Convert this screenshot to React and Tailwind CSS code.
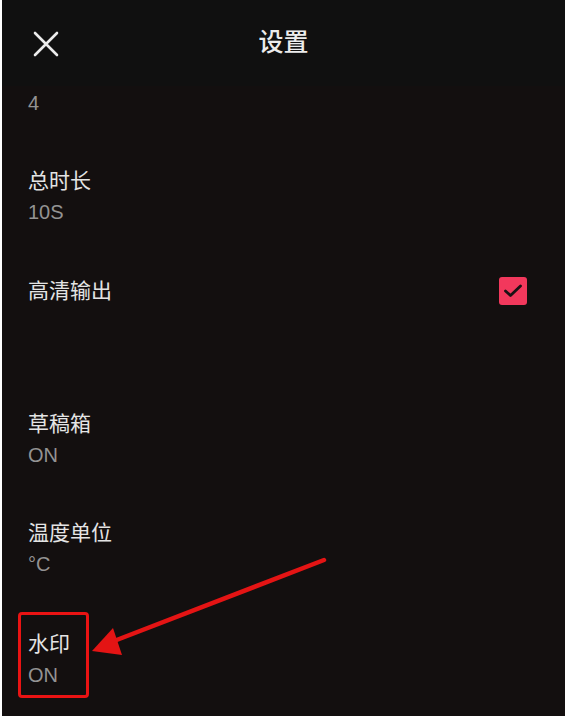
const font = { fontFamily: '"Liberation Sans", "Noto Sans CJK SC", sans-serif' };

const Item = ({ label, value, className = "", children }) => (
  <div className={className}>
    <div className="flex items-center justify-between pr-[38px]">
      <span className="text-[21px] leading-[28px] text-[#e4e4e4]">{label}</span>
      {children}
    </div>
    {value && (
      <div className="mt-[4px] text-[20px] leading-[26px] text-[#939393]">{value}</div>
    )}
  </div>
);

const Checkbox = () => (
  <div className="w-[28px] h-[28px] rounded-[3px] bg-[#f2385c] flex items-center justify-center">
    <svg width="22" height="22" viewBox="0 0 22 22" fill="none">
      <path d="M3.5 11 L8.5 15.5 L18.5 6" stroke="#1a1214" strokeWidth="2.8" strokeLinecap="round" strokeLinejoin="round" />
    </svg>
  </div>
);

export default function App() {
  return (
    <div className="relative w-[565px] h-[716px] overflow-hidden border-l-2 border-white bg-[#130f0f]" style={font}>
      <header className="relative h-[86px] bg-[#101010] flex items-center justify-center">
        <svg className="absolute left-[31px] top-[31px]" width="26" height="26" viewBox="0 0 26 26" fill="none">
          <path d="M2 2 L24 24 M24 2 L2 24" stroke="#ececec" strokeWidth="2.6" strokeLinecap="round" />
        </svg>
        <h1 className="text-[25px] leading-[32px] text-[#ececec] font-medium -mt-[2px]">设置</h1>
      </header>

      <main className="pl-[26px]">
        <div className="mt-[4px] text-[20px] leading-[26px] text-[#939393]">4</div>
        <Item className="mt-[51px]" label="总时长" value="10S" />
        <Item className="mt-[52px]" label="高清输出">
          <Checkbox />
        </Item>
        <Item className="mt-[105px]" label="草稿箱" value="ON" />
        <Item className="mt-[51px]" label="温度单位" value="°C" />
        <Item className="mt-[53px]" label="水印" value="ON" />
      </main>

      <div className="absolute left-[16px] top-[612px] w-[71px] h-[86px] rounded-[4px] border-[3px] border-[#ea1313]" />
      <svg className="absolute left-0 top-0 pointer-events-none" width="565" height="716" viewBox="0 0 565 716">
        <line x1="322" y1="560" x2="112" y2="641" stroke="#e41414" strokeWidth="4.5" strokeLinecap="round" />
        <polygon points="90,651 111,628 120,655" fill="#e41414" />
      </svg>
    </div>
  );
}
